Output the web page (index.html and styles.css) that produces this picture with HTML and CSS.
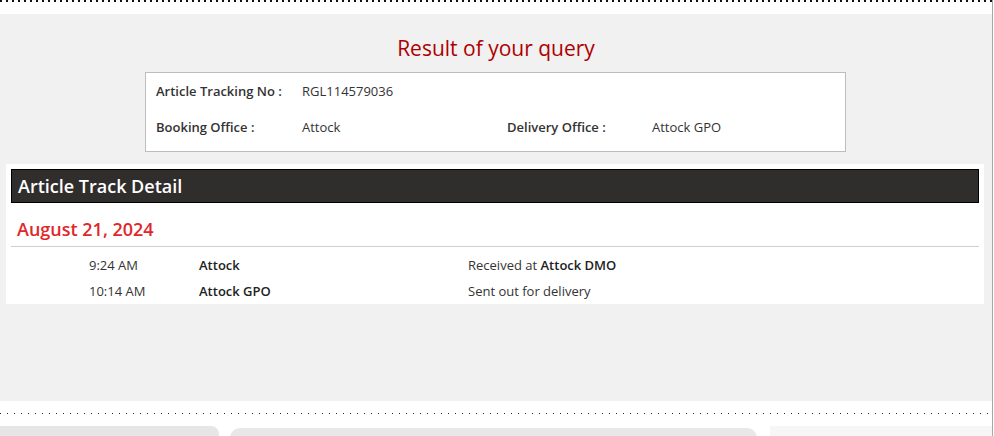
FILE: index.html
```html
<!DOCTYPE html>
<html>
<head>
<meta charset="utf-8">
<link rel="stylesheet" href="styles.css">
</head>
<body>
<div class="page">
  <div class="dots-top"></div>
  <div class="spacer-top"></div>
  <main class="main">
    <h1 class="title">Result of your query</h1>
    <div class="info">
      <div class="info-row">
        <span class="label">Article Tracking No :</span>
        <span class="value">RGL114579036</span>
      </div>
      <div class="info-row">
        <span class="label">Booking Office :</span>
        <span class="value">Attock</span>
        <span class="label">Delivery Office :</span>
        <span class="value">Attock GPO</span>
      </div>
    </div>
    <section class="track">
      <div class="track-head">Article Track Detail</div>
      <div class="date">August 21, 2024</div>
      <div class="rows">
        <div class="row">
          <span class="time">9:24 AM</span>
          <span class="loc">Attock</span>
          <span class="desc">Received at <b>Attock DMO</b></span>
        </div>
        <div class="row">
          <span class="time">10:14 AM</span>
          <span class="loc">Attock GPO</span>
          <span class="desc">Sent out for delivery</span>
        </div>
      </div>
    </section>
  </main>
  <div class="footer-gap">
    <div class="dots-bottom"></div>
  </div>
  <div class="footer">
    <div class="fbox fbox1"></div>
    <div class="fbox fbox2"></div>
    <div class="fbox fbox3"></div>
  </div>
</div>
</body>
</html>
```
FILE: styles.css
```css
html, body {
  margin: 0;
  padding: 0;
  background: #fff;
  overflow: hidden;
}
body {
  font-family: "Open Sans", "Liberation Sans", sans-serif;
  color: #333;
  font-size: 13px;
}
.page {
  width: 992px;
  height: 436px;
  border-right: 1px solid #a8a8a8;
  overflow: hidden;
}
.dots-top {
  height: 2px;
  background-image: repeating-linear-gradient(to right, #111 0 2px, transparent 2px 6px);
}
.spacer-top {
  height: 12px;
}
.main {
  background: #f1f1f1;
  height: 387px;
  padding-top: 1px;
  box-sizing: border-box;
}
.title {
  margin: 19px 0 0;
  text-align: center;
  font-size: 21px;
  font-weight: 400;
  line-height: 28px;
  color: #ae0000;
}
.info {
  width: 701px;
  box-sizing: border-box;
  margin: 10px 0 0 145px;
  background: #fff;
  border: 1px solid #bdbdbd;
  padding: 9px 0 15px 10px;
  display: flex;
  flex-direction: column;
  gap: 18px;
}
.info-row {
  display: grid;
  grid-template-columns: 146px 205px 145px 1fr;
  line-height: 18px;
}
.label {
  font-weight: 600;
  color: #333;
}
.value {
  color: #333;
}
.track {
  margin: 12px 8px 0 6px;
  background: #fff;
  padding: 5px 5px 0;
}
.track-head {
  background: #302e2c;
  border: 1px solid #000;
  color: #fff;
  font-size: 18px;
  font-weight: 600;
  line-height: 32px;
  padding-left: 6px;
}
.date {
  margin-top: 13px;
  padding: 0 0 4px 6px;
  color: #e1262c;
  font-size: 18px;
  font-weight: 600;
  line-height: 26px;
  border-bottom: 1px solid #cfcfcf;
}
.rows {
  padding-top: 5px;
}
.row {
  display: grid;
  grid-template-columns: 188px 269px 1fr;
  line-height: 26px;
}
.time {
  padding-left: 78px;
  white-space: nowrap;
}
.loc {
  font-weight: 600;
  color: #222;
}
.desc b {
  font-weight: 600;
  color: #222;
}
.footer-gap {
  height: 25px;
  position: relative;
}
.dots-bottom {
  position: absolute;
  left: 0;
  right: 0;
  top: 12px;
  height: 1px;
  background-image: repeating-linear-gradient(to right, #222 0 1px, transparent 1px 7px);
}
.footer {
  display: flex;
  height: 10px;
}
.fbox {
  height: 20px;
}
.fbox1 {
  width: 219px;
  background: #e6e6e6;
  border-top-right-radius: 8px;
}
.fbox2 {
  width: 527px;
  margin-left: 11px;
  margin-top: 2px;
  background: #e8e8e8;
  border-radius: 10px 10px 0 0;
}
.fbox3 {
  flex: 1;
  margin-left: 13px;
  background: #f6f6f6;
}
```
